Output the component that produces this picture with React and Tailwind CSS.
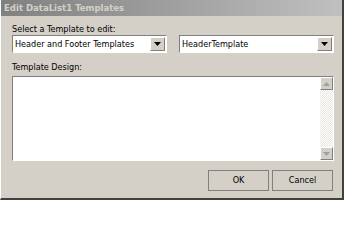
import React from "react";

const font = { fontFamily: '"DejaVu Sans Condensed", "DejaVu Sans", sans-serif' };

function DropArrow() {
    return (
        <div className="w-[15px] h-full flex items-center justify-center bg-[#d4d0c8] border-t border-l border-t-white border-l-white border-b border-r border-b-[#808080] border-r-[#808080]">
            <svg width="7" height="4" viewBox="0 0 7 4">
                <path d="M0 0h7L3.5 4z" fill="#000" />
            </svg>
        </div>
    );
}

function Select({ value, className }) {
    return (
        <div className={"h-[18px] flex items-stretch bg-white border border-t-[#808080] border-l-[#808080] border-b-white border-r-white " + className}>
            <div className="flex-1 flex items-center pl-[2px] text-[9px] text-black leading-none whitespace-nowrap overflow-hidden">{value}</div>
            <div className="p-[1px]">
                <DropArrow />
            </div>
        </div>
    );
}

function ScrollBtn({ up }) {
    return (
        <div className="h-[13px] flex items-center justify-center bg-[#d4d0c8] border-t border-l border-t-white border-l-white border-b border-r border-b-[#808080] border-r-[#808080]">
            <svg width="7" height="4" viewBox="0 0 7 4">
                <path d={up ? "M0 4h7L3.5 0z" : "M0 0h7L3.5 4z"} fill="#a0a0a0" />
            </svg>
        </div>
    );
}

export default function App() {
    return (
        <div style={font} className="w-[344px] h-[200px] bg-[#d4d0c8] flex flex-col border-l border-l-white border-r-2 border-r-[#404040] border-b-2 border-b-[#404040] overflow-hidden">
            <div className="h-[16px] shrink-0 flex items-center pl-[3px] bg-gradient-to-r from-[#808080] to-[#c0c0c0] text-[#d4d0c8] text-[9.5px] font-bold leading-none whitespace-nowrap">
                Edit DataList1 Templates
            </div>
            <div className="flex-1 flex flex-col pl-[11px] pr-[8px]">
                <div className="mt-[8px] h-[11px] text-[9px] leading-[11px] text-black">Select a Template to edit:</div>
                <div className="flex gap-[12px]">
                    <Select value="Header and Footer Templates" className="w-[155px]" />
                    <Select value="HeaderTemplate" className="w-[155px]" />
                </div>
                <div className="mt-[9px] h-[11px] text-[9px] leading-[11px] text-black">Template Design:</div>
                <div className="mt-[3px] h-[85px] w-[322px] flex bg-white border border-t-[#808080] border-l-[#808080] border-b-white border-r-white">
                    <div className="flex-1" />
                    <div className="w-[13px] flex flex-col bg-[repeating-conic-gradient(#ffffff_0_25%,#e8e6e1_0_50%)] bg-[length:2px_2px]">
                        <ScrollBtn up />
                        <div className="flex-1" />
                        <ScrollBtn />
                    </div>
                </div>
                <div className="mt-[9px] flex justify-end gap-[3px] pr-[1px]">
                    <button className="w-[61px] h-[21px] text-[9px] text-black bg-[#d4d0c8] border border-[#808080] leading-none">OK</button>
                    <button className="w-[61px] h-[21px] text-[9px] text-black bg-[#d4d0c8] border border-[#808080] leading-none">Cancel</button>
                </div>
            </div>
        </div>
    );
}
